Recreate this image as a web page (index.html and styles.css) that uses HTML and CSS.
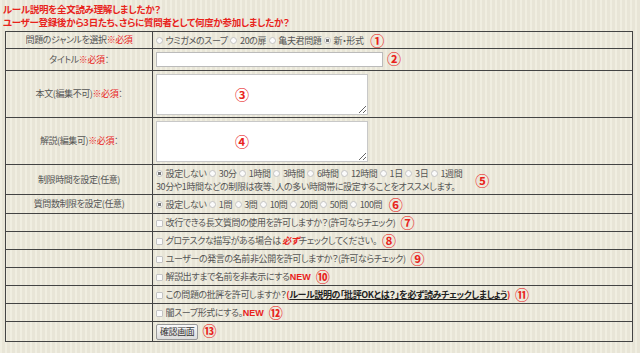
FILE: index.html
```html
<!DOCTYPE html>
<html>
<head>
    <title>問題作成</title>
    <link rel="stylesheet" href="styles.css">
</head>
<body>
    <div class="notice">
        <p>ルール説明を全文読み理解しましたか？</p>
        <p>ユーザー登録後から3日たち、さらに質問者として何度か参加しましたか？</p>
    </div>

    <form class="create-form">
        <table class="form-table">
            <tr class="row-genre">
                <th>問題のジャンルを選択<span class="req">※必須</span></th>
                <td>
                    <label><input type="radio" name="genre"> ウミガメのスープ</label>
                    <label><input type="radio" name="genre"> 20の扉</label>
                    <label><input type="radio" name="genre"> 亀夫君問題</label>
                    <label><input type="radio" name="genre" checked> 新・形式</label>
                    <span class="mark">①</span>
                </td>
            </tr>
            <tr class="row-title">
                <th>タイトル<span class="req">※必須</span>：</th>
                <td><input type="text" class="title-input"><span class="mark">②</span></td>
            </tr>
            <tr class="row-area">
                <th>本文(編集不可)<span class="req">※必須</span>：</th>
                <td>
                    <div class="area-wrap">
                        <textarea></textarea>
                        <span class="mark mark-over">③</span>
                    </div>
                </td>
            </tr>
            <tr class="row-area">
                <th>解説(編集可)<span class="req">※必須</span>：</th>
                <td>
                    <div class="area-wrap">
                        <textarea></textarea>
                        <span class="mark mark-over">④</span>
                    </div>
                </td>
            </tr>
            <tr class="row-limit">
                <th>制限時間を設定(任意)</th>
                <td>
                    <div class="limit-cell">
                        <div class="limit-text">
                            <div>
                                <label><input type="radio" name="time" checked> 設定しない</label>
                                <label><input type="radio" name="time"> 30分</label>
                                <label><input type="radio" name="time"> 1時間</label>
                                <label><input type="radio" name="time"> 3時間</label>
                                <label><input type="radio" name="time"> 6時間</label>
                                <label><input type="radio" name="time"> 12時間</label>
                                <label><input type="radio" name="time"> 1日</label>
                                <label><input type="radio" name="time"> 3日</label>
                                <label><input type="radio" name="time"> 1週間</label>
                            </div>
                            <div>30分や1時間などの制限は夜等、人の多い時間帯に設定することをオススメします。</div>
                        </div>
                        <span class="mark mark-far">⑤</span>
                    </div>
                </td>
            </tr>
            <tr class="row-count">
                <th>質問数制限を設定(任意)</th>
                <td>
                    <label><input type="radio" name="count" checked> 設定しない</label>
                    <label><input type="radio" name="count"> 1問</label>
                    <label><input type="radio" name="count"> 3問</label>
                    <label><input type="radio" name="count"> 10問</label>
                    <label><input type="radio" name="count"> 20問</label>
                    <label><input type="radio" name="count"> 50問</label>
                    <label><input type="radio" name="count"> 100問</label>
                    <span class="mark">⑥</span>
                </td>
            </tr>
            <tr>
                <th></th>
                <td><label><input type="checkbox"> 改行できる長文質問の使用を許可しますか？(許可ならチェック)</label><span class="mark">⑦</span></td>
            </tr>
            <tr>
                <th></th>
                <td><label><input type="checkbox"> グロテスクな描写がある場合は <em class="must">必ず</em>チェックしてください。</label><span class="mark">⑧</span></td>
            </tr>
            <tr>
                <th></th>
                <td><label><input type="checkbox"> ユーザーの発言の名前非公開を許可しますか？(許可ならチェック)</label><span class="mark">⑨</span></td>
            </tr>
            <tr>
                <th></th>
                <td><label><input type="checkbox"> 解説出すまで名前を非表示にする<b class="new">NEW</b></label><span class="mark">⑩</span></td>
            </tr>
            <tr>
                <th></th>
                <td><label><input type="checkbox"> この問題の批評を許可しますか？<b class="paren">(</b><a class="rule-link">ルール説明の「批評OKとは？」を必ず読みチェックしましょう</a><b class="paren">)</b></label><span class="mark">⑪</span></td>
            </tr>
            <tr>
                <th></th>
                <td><label><input type="checkbox"> 闇スープ形式にする。<b class="new">NEW</b></label><span class="mark">⑫</span></td>
            </tr>
            <tr class="row-submit">
                <th></th>
                <td><button type="button">確認画面</button><span class="mark">⑬</span></td>
            </tr>
        </table>
    </form>
</body>
</html>
```

FILE: styles.css
```css
body {
    margin: 0;
    padding: 3px 5px 0 3px;
    font-family: "Noto Sans CJK JP", "Noto Sans", sans-serif;
    font-size: 9px;
    letter-spacing: -0.4px;
    font-feature-settings: "palt";
    color: #555;
    background-color: #edeadb;
    background-image: repeating-linear-gradient(90deg, rgba(255,255,255,0.18) 0, rgba(255,255,255,0.18) 2px, rgba(0,0,0,0.02) 2px, rgba(0,0,0,0.02) 5px);
}
.notice {
    margin-bottom: 2px;
}
.notice p {
    margin: 0;
    color: #e8231c;
    font-weight: bold;
    font-size: 9.5px;
    letter-spacing: -0.3px;
    line-height: 13px;
}
.create-form {
    margin: 0 0 0 2px;
}
.form-table {
    width: 628px;
    border-collapse: collapse;
    table-layout: fixed;
    border: 1px solid #888;
}
.form-table tr {
    height: 18px;
}
.form-table th,
.form-table td {
    border: 1px solid #444;
    padding: 0 3px;
    line-height: 12px;
    white-space: nowrap;
    vertical-align: middle;
}
.form-table th {
    width: 140px;
    font-weight: normal;
    text-align: center;
}
.form-table td {
    text-align: left;
}
.req {
    color: #e8231c;
}
.form-table .row-genre { height: 17px; }
.form-table .row-title { height: 22px; }
.form-table .row-area { height: 47px; }
.form-table .row-limit { height: 30px; }
.form-table .row-count { height: 19px; }
.form-table .row-submit { height: 20px; }

label {
    margin-right: 1px;
}
input[type=radio],
input[type=checkbox] {
    -webkit-appearance: none;
    appearance: none;
    width: 7px;
    height: 7px;
    margin: 0 1px 0 0;
    border: 1px solid #c4c4c4;
    background: #fbfbfb;
    vertical-align: -0.5px;
}
input[type=radio] {
    border-radius: 50%;
}
input[type=radio]:checked {
    background: radial-gradient(circle, #777 0, #777 1.5px, #fbfbfb 2px);
}
input[type=checkbox] {
    border-radius: 1px;
}
.title-input {
    width: 227px;
    height: 15px;
    box-sizing: border-box;
    border: 1px solid #bbb;
    background: #fff;
    vertical-align: middle;
    margin: 0;
}
.area-wrap {
    position: relative;
    width: 212px;
    height: 41px;
}
textarea {
    display: block;
    width: 212px;
    height: 41px;
    box-sizing: border-box;
    border: 1px solid #c8c8c8;
    background: #fff;
    resize: both;
    margin: 0;
}
.mark {
    color: #e8231c;
    font-size: 14px;
    font-weight: bold;
    letter-spacing: 0;
    line-height: 12px;
    margin-left: 4px;
    vertical-align: -2px;
}
.mark-over {
    position: absolute;
    left: 79px;
    top: 14px;
    margin: 0;
}
.limit-cell {
    display: flex;
    align-items: center;
}
.limit-text {
    line-height: 13px;
}
.mark-far {
    margin-left: 12px;
}
.must {
    color: #e8231c;
    font-weight: bold;
    font-style: italic;
}
.new {
    color: #e8231c;
    font-family: "Liberation Sans", Arial, sans-serif;
    font-size: 9px;
    letter-spacing: 0;
}
.paren {
    color: #e8231c;
}
.rule-link {
    color: #222;
    font-weight: bold;
    text-decoration: underline;
}
button {
    font-family: inherit;
    font-size: 9px;
    letter-spacing: -0.4px;
    color: #333;
    padding: 1px 3px;
    height: 16px;
    line-height: 12px;
    border: 1px solid #999;
    border-radius: 2px;
    background: linear-gradient(#fafafa, #dcdcdc);
    vertical-align: middle;
}
```
